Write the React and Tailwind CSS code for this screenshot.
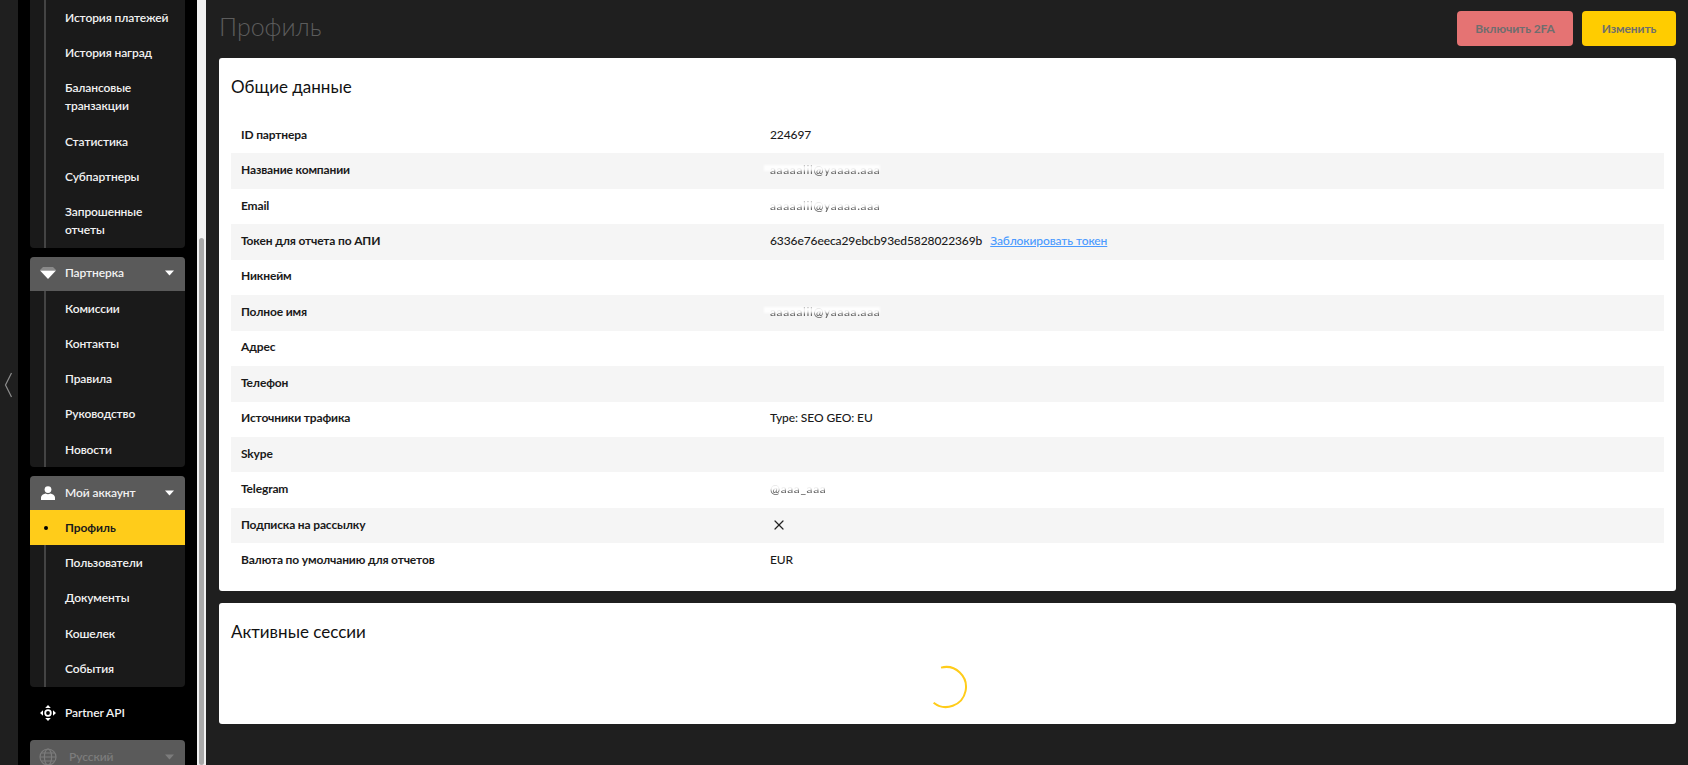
import { X } from "lucide-react";

const FONT = "font-['Lato','Noto_Sans',sans-serif]";

const rows = [
  ["ID партнера", "224697"],
  ["Название компании", "redacted"],
  ["Email", "redacted"],
  ["Токен для отчета по АПИ", "token"],
  ["Никнейм", ""],
  ["Полное имя", "redacted"],
  ["Адрес", ""],
  ["Телефон", ""],
  ["Источники трафика", "Type: SEO GEO: EU"],
  ["Skype", ""],
  ["Telegram", "redactedShort"],
  ["Подписка на рассылку", "cross"],
  ["Валюта по умолчанию для отчетов", "EUR"],
];

// blurred-out values from the screenshot
function Redacted({ text }) {
  return (
    <span className="relative inline-block align-middle">
      <span className="block whitespace-nowrap text-[12px] leading-[18px] tracking-[0.6px] text-[#666] blur-[0.7px]">
        {text}
      </span>
      <span className="absolute left-[-6px] right-0 top-[4px] h-[6px] bg-white/90 blur-[1px]" />
    </span>
  );
}

function Value({ value }) {
  if (value === "redacted") return <Redacted text="aaaaalil@yaaaa.aaa" />;
  if (value === "redactedShort") return <Redacted text="@aaa_aaa" />;
  if (value === "cross") return <X size={16} strokeWidth={1.8} className="ml-[1px] text-[#222]" />;
  if (value === "token")
    return (
      <>
        <span>6336e76eeca29ebcb93ed5828022369b</span>
        <a className="ml-2 text-[#4a9aff] underline">Заблокировать токен</a>
      </>
    );
  return <span>{value}</span>;
}

function Caret({ className = "fill-white" }) {
  return (
    <svg width="10" height="6" viewBox="0 0 10 6" className={className}>
      <path d="M0 0.5h9L4.5 5.5z" />
    </svg>
  );
}

function SubItem({ children, active }) {
  if (active)
    return (
      <div className="flex h-[35px] items-center bg-[#ffcc1a] font-bold text-[#1a1a1a]">
        <span className="ml-[14px] h-[4px] w-[4px] rounded-full bg-black" />
        <span className="ml-[17px]">{children}</span>
      </div>
    );
  return <div className="py-[8.67px] pl-[35px] pr-[10px]">{children}</div>;
}

function Group({ icon, title, items, activeItem }) {
  return (
    <div className="mt-[9px] overflow-hidden rounded-[4px] bg-[#1a1a1a]">
      <div className="flex h-[34px] items-center bg-[#5a5a5a] pb-[1px] pr-[10px]">
        <span className="flex w-[35px] justify-center">{icon}</span>
        <span className="flex-1">{title}</span>
        <Caret />
      </div>
      <SubItems items={items} activeItem={activeItem} />
    </div>
  );
}

function SubItems({ items, activeItem }) {
  const rest = items.filter((item) => item !== activeItem);
  return (
    <>
      {activeItem && <SubItem active>{activeItem}</SubItem>}
      <div className="relative">
        <div className="absolute bottom-0 left-[14px] top-0 w-[2px] bg-[#444]" />
        {rest.map((item) => (
          <SubItem key={item}>{item}</SubItem>
        ))}
      </div>
    </>
  );
}

function Sidebar() {
  return (
    <aside className="w-[179px] shrink-0 overflow-hidden bg-black px-[12px] text-[12px] font-semibold leading-[18px] tracking-[-0.1px] text-[#f2f2f2]">
      <div className="mt-[-1px] overflow-hidden rounded-b-[4px] border-t border-[#555] bg-[#1a1a1a]">
        <SubItems
          items={[
            "История платежей",
            "История наград",
            "Балансовые транзакции",
            "Статистика",
            "Субпартнеры",
            "Запрошенные отчеты",
          ]}
        />
      </div>
      <Group
        title="Партнерка"
        icon={
          <svg width="16" height="12" viewBox="0 0 16 12">
            <path d="M3 0h10l3 3H0z" fill="#8a8a8a" />
            <path d="M0 3.600h16L8 12z" fill="#fff" />
          </svg>
        }
        items={["Комиссии", "Контакты", "Правила", "Руководство", "Новости"]}
      />
      <Group
        title="Мой аккаунт"
        icon={
          <svg width="14" height="14" viewBox="0 0 14 14" fill="#fff">
            <circle cx="7" cy="3.600" r="3.400" />
            <path d="M0 14v-2.600C0 9.300 2.600 8 4.600 7.600c1.400.7 3.400.7 4.800 0C11.400 8 14 9.300 14 11.400V14z" />
          </svg>
        }
        items={["Профиль", "Пользователи", "Документы", "Кошелек", "События"]}
        activeItem="Профиль"
      />
      <div className="mt-[9px] flex h-[35px] items-center">
        <span className="flex w-[35px] justify-center">
          <svg width="16" height="16" viewBox="0 0 16 16" fill="#fff">
            <path d="M8 0l2.800 3H5.200zM8 16l-2.800-3h5.600zM0 8l3-2.800v5.600zM16 8l-3 2.800V5.200z" />
            <circle cx="8" cy="8" r="2.800" fill="none" stroke="#fff" strokeWidth="1.800" />
          </svg>
        </span>
        <span>Partner API</span>
      </div>
      <div className="mt-[9px] flex h-[34px] items-center rounded-[4px] bg-[#5a5a5a] pr-[10px] text-[#7c7c7c]">
        <span className="flex w-[35px] justify-center">
          <svg width="18" height="18" viewBox="0 0 18 18" fill="none" stroke="#7c7c7c" strokeWidth="1.200">
            <circle cx="9" cy="9" r="8" />
            <ellipse cx="9" cy="9" rx="3.600" ry="8" />
            <path d="M1 9h16M2.200 5h13.600M2.200 13h13.600" />
          </svg>
        </span>
        <span className="flex-1 pl-[4px]">Русский</span>
        <Caret className="fill-[#7c7c7c]" />
      </div>
    </aside>
  );
}

function Card({ title, className, children }) {
  return (
    <section className={`rounded-[3px] bg-white px-[12px] ${className}`}>
      <h2 className="pt-[17px] text-[17px] leading-[24px] font-normal text-[#111]">{title}</h2>
      {children}
    </section>
  );
}

export default function App() {
  return (
    <div className={`flex h-[765px] w-[1688px] overflow-hidden bg-[#1f1f1f] ${FONT}`}>
      <div className="flex w-[18px] shrink-0 items-center">
        <svg width="18" height="26" viewBox="0 0 18 26" fill="none" stroke="#8c8c8c" strokeWidth="1.200" className="mt-[5px]">
          <path d="M11.500 1L5.500 13l6 12" />
        </svg>
      </div>
      <Sidebar />
      <div className="w-[9px] shrink-0 bg-[#f1f1f1] px-[2px] pt-[238px]">
        <div className="h-full rounded-full bg-[#a8a8a8]" />
      </div>
      <main className="min-w-0 flex-1 pl-[13px] pr-[12px]">
        <header className="flex h-[58px] items-start justify-between">
          <h1 className="pt-[10px] text-[25px] leading-[32px] font-light text-[#5c5c5c]">Профиль</h1>
          <div className="mt-[11px] flex gap-[9px] text-[12px] font-bold tracking-[-0.1px] text-[#6e6e6e]">
            <button className="h-[35px] w-[116px] rounded-[4px] bg-[#e57373]">Включить 2FA</button>
            <button className="h-[35px] w-[94px] rounded-[4px] bg-[#ffcc00]">Изменить</button>
          </div>
        </header>
        <Card title="Общие данные" className="h-[533px]">
          <div className="mt-[19px] text-[12px] leading-[18px] text-[#1a1a1a]">
            {rows.map(([label, value], i) => (
              <div key={label} className={`flex h-[35.440px] items-center pb-[2px] pl-[10px] ${i % 2 ? "bg-[#f5f5f5]" : ""}`}>
                <span className="w-[529px] shrink-0 font-bold tracking-[-0.15px]">{label}</span>
                <span className="flex items-center font-medium tracking-[-0.1px]">
                  <Value value={value} />
                </span>
              </div>
            ))}
          </div>
        </Card>
        <Card title="Активные сессии" className="mt-[12px] h-[121px]">
          <div className="flex justify-center pr-[3px] pt-[21px]">
            <svg width="44" height="44" viewBox="0 0 44 44" fill="none" stroke="#ffcc1a" strokeWidth="2">
              <path d="M17 2.600A20 20 0 1 1 9.600 37.700" />
            </svg>
          </div>
        </Card>
      </main>
    </div>
  );
}
